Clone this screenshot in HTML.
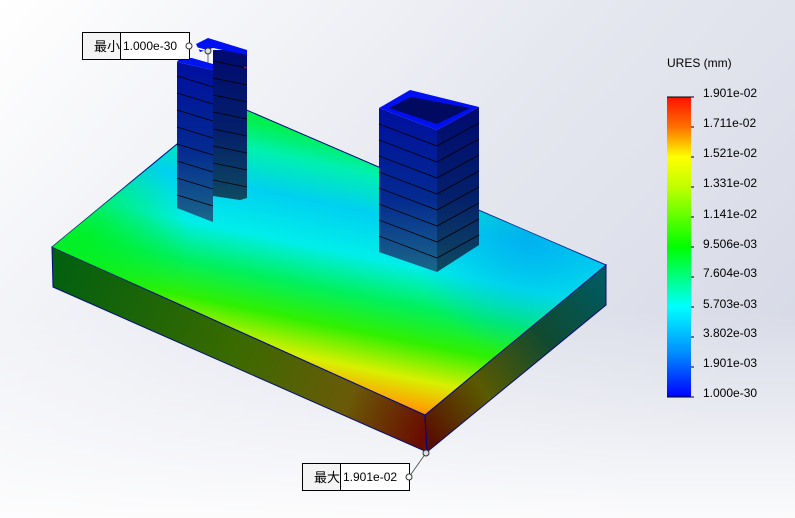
<!DOCTYPE html>
<html><head><meta charset="utf-8"><style>
html,body{margin:0;padding:0;width:795px;height:518px;overflow:hidden;}
body{background:#eef0f5;}
svg{display:block}
text{font-family:"Liberation Sans","Noto Sans CJK SC",sans-serif;}
</style></head><body>
<svg width="795" height="518" viewBox="0 0 795 518" xmlns="http://www.w3.org/2000/svg">
<defs>
<linearGradient id="bg" x1="0" y1="0" x2="1" y2="0.6">
<stop offset="0" stop-color="#ffffff"/><stop offset="0.55" stop-color="#e6e8f0"/><stop offset="1" stop-color="#d8dbe7"/>
</linearGradient>
<linearGradient id="bgb" x1="0" y1="0" x2="0" y2="1">
<stop offset="0.6" stop-color="#ffffff" stop-opacity="0"/><stop offset="1" stop-color="#ffffff" stop-opacity="0.9"/>
</linearGradient>
<linearGradient id="top" gradientUnits="userSpaceOnUse" x1="345" y1="140" x2="290" y2="410">
<stop offset="0" stop-color="#00f050"/><stop offset="0.1" stop-color="#00f0b0"/>
<stop offset="0.24" stop-color="#00d0f0"/><stop offset="0.4" stop-color="#00eeea"/>
<stop offset="0.54" stop-color="#00f060"/><stop offset="0.67" stop-color="#30f000"/>
<stop offset="0.8" stop-color="#d8f000"/><stop offset="0.9" stop-color="#ffa000"/>
<stop offset="1" stop-color="#ff4000"/>
</linearGradient>
<radialGradient id="grn" gradientUnits="userSpaceOnUse" cx="80" cy="240" r="110">
<stop offset="0" stop-color="#00f020" stop-opacity="0.9"/><stop offset="1" stop-color="#00f020" stop-opacity="0"/>
</radialGradient>
<radialGradient id="blue" gradientUnits="userSpaceOnUse" cx="530" cy="235" r="120">
<stop offset="0" stop-color="#00a8f0" stop-opacity="0.8"/><stop offset="1" stop-color="#00b8f0" stop-opacity="0"/>
</radialGradient>
<linearGradient id="lf" gradientUnits="userSpaceOnUse" x1="52" y1="260" x2="425" y2="430">
<stop offset="0" stop-color="#006010"/><stop offset="0.5" stop-color="#3a6a00"/><stop offset="0.8" stop-color="#6a5a08"/><stop offset="1" stop-color="#6a0c00"/>
</linearGradient>
<linearGradient id="rf" gradientUnits="userSpaceOnUse" x1="425" y1="430" x2="606" y2="285">
<stop offset="0" stop-color="#5a1000"/><stop offset="0.3" stop-color="#5a5a00"/><stop offset="0.65" stop-color="#104a30"/><stop offset="1" stop-color="#005a60"/>
</linearGradient>
<linearGradient id="tw" x1="0" y1="0" x2="0" y2="1">
<stop offset="0" stop-color="#000fa0"/><stop offset="0.55" stop-color="#042a90"/><stop offset="1" stop-color="#1a6888"/>
</linearGradient>
<linearGradient id="tw2" x1="0" y1="0" x2="0" y2="1">
<stop offset="0" stop-color="#000a70"/><stop offset="0.55" stop-color="#04206a"/><stop offset="1" stop-color="#0e4a60"/>
</linearGradient>
<linearGradient id="leg" x1="0" y1="0" x2="0" y2="1">
<stop offset="0" stop-color="#ff1000"/><stop offset="0.1" stop-color="#ff7000"/><stop offset="0.2" stop-color="#ffff00"/>
<stop offset="0.3" stop-color="#c0ff00"/><stop offset="0.5" stop-color="#00ff00"/><stop offset="0.7" stop-color="#00ffff"/>
<stop offset="0.85" stop-color="#0090ff"/><stop offset="1" stop-color="#0000ff"/>
</linearGradient>
</defs>
<rect width="795" height="518" fill="url(#bg)"/>
<rect width="795" height="518" fill="url(#bgb)"/>

<polygon points="52,247 425,415 427,452 53,287" fill="url(#lf)" stroke="#000a80" stroke-width="1"/>
<polygon points="425,415 606,265 606,305 427,452" fill="url(#rf)" stroke="#000a80" stroke-width="1"/>
<polygon points="228,102 606,265 425,415 52,247" fill="url(#top)" stroke="#000a80" stroke-width="1"/>
<polygon points="228,102 606,265 425,415 52,247" fill="url(#grn)"/>
<polygon points="228,102 606,265 425,415 52,247" fill="url(#blue)"/>
<line x1="425" y1="415" x2="427" y2="452" stroke="#000a80"/>

<polygon points="213,50 247,50 247,198 240,200 213,196" fill="url(#tw2)"/>
<polygon points="196,44 208,38 247,50 247,55 213,48 200,52" fill="#0010f0"/>
<polygon points="177,62 213,70 213,222 177,208" fill="url(#tw)"/>
<polygon points="192,58 213,64 213,70 177,62 180,58" fill="#0014f0"/>
<g stroke="#000" stroke-width="0.8" fill="none">
<path d="M177,76 L213,87 M177,93 L213,104 M177,110 L213,121 M177,127 L213,138 M177,144 L213,155 M177,161 L213,172 M177,178 L213,189 M177,195 L213,206"/>
<path d="M213,61 L247,68 M213,78 L247,85 M213,95 L247,102 M213,112 L247,119 M213,129 L247,136 M213,146 L247,153 M213,163 L247,170 M213,180 L247,187"/>
</g>
<line x1="244" y1="68" x2="247" y2="67" stroke="#f00" stroke-width="1"/>

<polygon points="379,108 437,130 437,272 379,252" fill="url(#tw)"/>
<polygon points="437,130 479,107 479,245 437,272" fill="url(#tw2)"/>
<polygon points="379,108 410,90 479,107 437,130" fill="#0010f0"/>
<polygon points="389,108 411,97 470,108 437,124" fill="#000a60"/>
<g stroke="#000" stroke-width="0.8" fill="none">
<path d="M379,124 L437,146 L479,123 M379,140 L437,162 L479,139 M379,156 L437,178 L479,155 M379,172 L437,194 L479,171 M379,188 L437,210 L479,187 M379,204 L437,226 L479,203 M379,220 L437,242 L479,219 M379,236 L437,258 L479,235"/>
</g>

<line x1="189" y1="46" x2="208" y2="51" stroke="#fff" stroke-width="1.5"/>
<line x1="208" y1="51" x2="208" y2="64" stroke="#333" stroke-width="0.7"/>
<rect x="82.5" y="32.5" width="107" height="27" fill="#fff" stroke="#000"/>
<rect x="82.5" y="32.5" width="38" height="27" fill="#f4f4f4" stroke="#000"/>
<text x="94" y="51" font-size="13" fill="#000">最小</text>
<text x="123" y="50" font-size="12" fill="#000">1.000e-30</text>
<circle cx="189" cy="46" r="3" fill="#fff" stroke="#333"/>
<circle cx="208" cy="51" r="3" fill="#ddd" stroke="#333"/>

<line x1="409" y1="477" x2="426" y2="453" stroke="#444" stroke-width="0.8"/>
<rect x="302.5" y="463.5" width="107" height="27" fill="#fff" stroke="#000"/>
<rect x="302.5" y="463.5" width="38" height="27" fill="#f4f4f4" stroke="#000"/>
<text x="314" y="482" font-size="13" fill="#000">最大</text>
<text x="343" y="481" font-size="12" fill="#000">1.901e-02</text>
<circle cx="409" cy="477" r="3" fill="#fff" stroke="#333"/>
<circle cx="426" cy="453" r="3" fill="#ddd" stroke="#333"/>

<text x="667" y="67" font-size="12" fill="#000">URES (mm)</text>
<rect x="667" y="97" width="24" height="300" fill="url(#leg)"/>
<line x1="667" y1="97" x2="694" y2="97" stroke="#000"/>
<line x1="667" y1="397" x2="694" y2="397" stroke="#000"/>
<g stroke="#000" stroke-width="1">
<path d="M691,127h3M691,157h3M691,187h3M691,217h3M691,247h3M691,277h3M691,307h3M691,337h3M691,367h3"/>
</g>
<g font-size="12" fill="#000">
<text x="703" y="97">1.901e-02</text>
<text x="703" y="127">1.711e-02</text>
<text x="703" y="157">1.521e-02</text>
<text x="703" y="187">1.331e-02</text>
<text x="703" y="218">1.141e-02</text>
<text x="703" y="248">9.506e-03</text>
<text x="703" y="277">7.604e-03</text>
<text x="703" y="308">5.703e-03</text>
<text x="703" y="337">3.802e-03</text>
<text x="703" y="367">1.901e-03</text>
<text x="703" y="397">1.000e-30</text>
</g>
</svg>
</body></html>
